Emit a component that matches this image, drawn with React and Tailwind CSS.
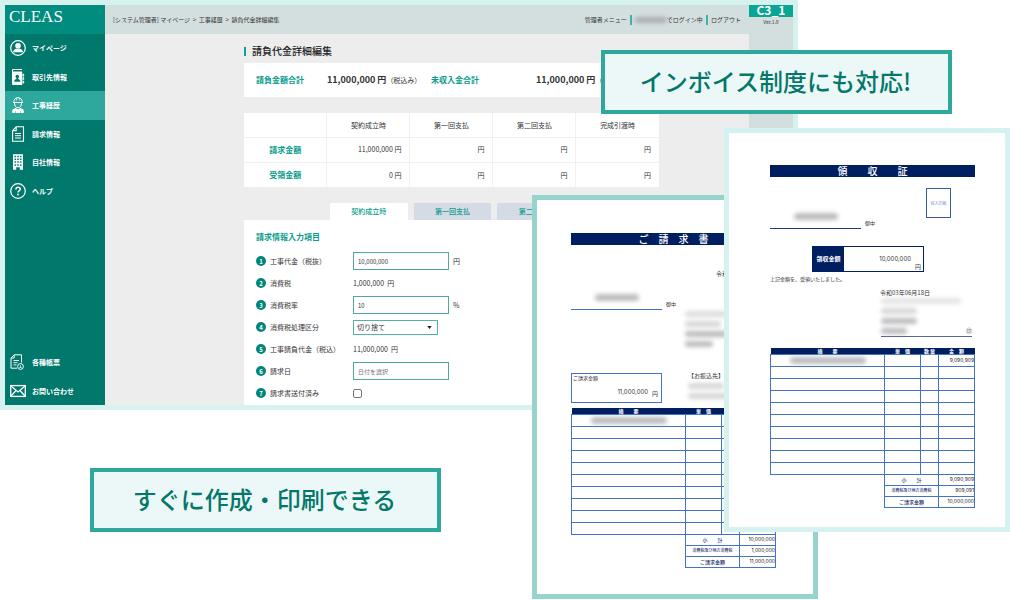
import React, { useState } from 'react';
import clsx from 'clsx';

const MENU = [
  { label: 'マイページ', Icon: UserIcon },
  { label: '取引先情報', Icon: ContactIcon },
  { label: '工事経歴', Icon: WorkerIcon, active: true },
  { label: '請求情報', Icon: BillIcon },
  { label: '自社情報', Icon: BuildingIcon },
  { label: 'ヘルプ', Icon: HelpIcon },
];

const SUB_MENU = [
  { label: '各種帳票', Icon: ReportIcon },
  { label: 'お問い合わせ', Icon: MailIcon },
];

const STAGES = ['契約成立時', '第一回支払', '第二回支払', '完成引渡時'];

const AMOUNTS = [
  { label: '請求金額', values: ['11,000,000 円', '円', '円', '円'] },
  { label: '受領金額', values: ['0 円', '円', '円', '円'] },
];

const BLANK_ROWS = [1, 2, 3, 4, 5, 6, 7, 8, 9];

export default function App() {
  return (
    <div className="relative min-h-screen overflow-hidden bg-white font-['Noto_Sans_CJK_JP',sans-serif] text-[#333]">
      <AppWindow />
      <Invoice />
      <Receipt />
      <Callout className="right-[58px] top-[50px]">インボイス制度にも対応!</Callout>
      <Callout className="left-[90px] top-[468px]">すぐに作成・印刷できる</Callout>
    </div>
  );
}

function Callout({ className, children }) {
  return (
    <p
      className={clsx(
        'absolute flex h-16 w-[351px] items-center justify-center border-4 border-[#2ea79c] bg-[#ecf8f7] pr-[2px] pb-[2px] text-2xl font-medium text-[#04776b]',
        className
      )}
    >
      {children}
    </p>
  );
}

/* ---------- App window ---------- */

function AppWindow() {
  return (
    <div className="flex w-[79%] border-5 border-[#d6f2ef] bg-[#ededed]">
      <Sidebar />
      <div className="min-w-0 flex-1">
        <Header />
        <main className="pr-[90px] pl-[139px] pt-[10px]">
          <h1 className="flex items-center gap-[6px] text-[10px] leading-[14px] font-medium text-[#222]">
            <span className="h-[9px] w-[2px] bg-[#0aa594]" />
            請負代金詳細編集
          </h1>
          <Summary />
          <AmountTable />
          <BillingForm />
        </main>
      </div>
      <div className="w-11 bg-[#d3dede] text-center">
        <div className="h-3 bg-[#0aa594] text-[12px] leading-[9px] font-bold text-white">C3_1</div>
        <div className="text-[5px] leading-[10px]">Ver.1.0</div>
      </div>
    </div>
  );
}

function Sidebar() {
  return (
    <nav className="flex w-[100px] flex-col bg-[#00786c] text-[7px] font-bold text-white">
      <div className="h-[29px] bg-[#008c7f] pl-1 font-['Liberation_Serif',serif] text-[17px] leading-6 font-normal">
        CLEAS
      </div>
      <ul className="grid h-[171px] grid-rows-6">
        {MENU.map((item) => (
          <MenuItem key={item.label} {...item} />
        ))}
      </ul>
      <ul className="mt-auto grid h-[57px] grid-rows-2">
        {SUB_MENU.map((item) => (
          <MenuItem key={item.label} {...item} />
        ))}
      </ul>
    </nav>
  );
}

function MenuItem({ label, Icon, active }) {
  return (
    <li className={clsx('flex', active && 'bg-[#2ea79c]')}>
      <a href="#" className="flex flex-1 items-center gap-[6px] pl-[5px]">
        <Icon />
        {label}
      </a>
    </li>
  );
}

function Header() {
  return (
    <header className="flex h-[29px] items-center justify-between bg-[#d3dede] px-2 text-[6px]">
      <div>[システム管理者] マイページ&nbsp; &gt; &nbsp;工事経歴&nbsp; &gt; &nbsp;請負代金詳細編集</div>
      <div className="flex items-center gap-[3px]">
        <a href="#">管理者メニュー</a>
        <span className="h-[10px] w-[2px] bg-[#3fb3a7]" />
        <span className="flex items-center">
          <Smudge className="h-[6px] w-8" />
          でログイン中
        </span>
        <span className="h-[10px] w-[2px] bg-[#3fb3a7]" />
        <a href="#">ログアウト</a>
      </div>
    </header>
  );
}

function Summary() {
  return (
    <dl className="mt-[5px] flex h-[34px] items-center overflow-hidden bg-white pl-3 whitespace-nowrap">
      <dt className="w-[71px] text-[8px] font-bold text-[#0a9d8e]">請負金額合計</dt>
      <dd className="w-[104px] text-[9px] font-bold">
        11,000,000 円<span className="text-[7px] font-normal">（税込み）</span>
      </dd>
      <dt className="w-[105px] text-[8px] font-bold text-[#0a9d8e]">未収入金合計</dt>
      <dd className="text-[9px] font-bold">
        11,000,000 円<span className="text-[7px] font-normal">（税込み）</span>
      </dd>
    </dl>
  );
}

function AmountTable() {
  return (
    <table className="mt-4 w-full table-fixed border-collapse bg-white text-[7px]">
      <thead>
        <tr className="h-6">
          <td />
          {STAGES.map((stage) => (
            <th key={stage} scope="col" className="border-l border-[#f0f0f0] font-normal">
              {stage}
            </th>
          ))}
        </tr>
      </thead>
      <tbody>
        {AMOUNTS.map((row) => (
          <tr key={row.label} className="h-[25px] border-t border-[#f0f0f0]">
            <th scope="row" className="text-[8px] font-bold text-[#0a9d8e]">
              {row.label}
            </th>
            {row.values.map((value, i) => (
              <td key={i} className="border-l border-[#f0f0f0] pr-2 text-right">
                {value}
              </td>
            ))}
          </tr>
        ))}
      </tbody>
    </table>
  );
}

function BillingForm() {
  const [tab, setTab] = useState(0);

  return (
    <section className="mt-4 text-[7px]">
      <div className="grid grid-cols-4 gap-[6px] pl-[86px]">
        {STAGES.map((stage, i) => (
          <button
            key={stage}
            type="button"
            onClick={() => setTab(i)}
            className={clsx('h-[17px] font-medium text-[#0a9d8e]', i === tab ? 'bg-white' : 'bg-[#d5dbe4]')}
          >
            {stage}
          </button>
        ))}
      </div>
      <form className="bg-white pt-[11px] pb-px pl-3">
        <h2 className="mb-[7px] text-[8px] leading-3 font-bold text-[#0a9d8e]">請求情報入力項目</h2>
        <Field no={1} label="工事代金（税抜）" id="price">
          <input id="price" className="h-[18px] w-24 border border-[#4fa79f] px-1 text-[6px]" defaultValue="10,000,000" />
          円
        </Field>
        <Field no={2} label="消費税">1,000,000 &nbsp;円</Field>
        <Field no={3} label="消費税率" id="rate">
          <input id="rate" className="h-[18px] w-24 border border-[#4fa79f] px-1 text-[6px]" defaultValue="10" />%
        </Field>
        <Field no={4} label="消費税処理区分" id="rounding">
          <span className="relative">
            <select id="rounding" className="block h-[15px] w-[85px] appearance-none border border-[#4fb3a9] px-[3px]">
              <option>切り捨て</option>
              <option>切り上げ</option>
              <option>四捨五入</option>
            </select>
            <svg viewBox="0 0 6 4" className="pointer-events-none absolute top-[6px] right-[6px] h-[3px] w-[5px]">
              <path d="M0 0h6L3 4z" fill="#222" />
            </svg>
          </span>
        </Field>
        <Field no={5} label="工事請負代金（税込）">11,000,000 &nbsp;円</Field>
        <Field no={6} label="請求日" id="date">
          <input
            id="date"
            className="h-[18px] w-24 border border-[#4fa79f] px-1 text-[6px] placeholder:text-[#777]"
            placeholder="日付を選択"
          />
        </Field>
        <Field no={7} label="請求書送付済み" id="sent">
          <input id="sent" type="checkbox" className="size-[9px] appearance-none rounded-xs border border-[#777] checked:bg-[#0a9d8e]" />
        </Field>
      </form>
    </section>
  );
}

function Field({ no, label, id, children }) {
  return (
    <div className="flex h-[22px] items-center">
      <span className="mr-1 flex size-[10px] items-center justify-center rounded-full bg-[#00857a] text-[6px] font-bold text-white">
        {no}
      </span>
      {id ? (
        <label htmlFor={id} className="w-[83px]">
          {label}
        </label>
      ) : (
        <span className="w-[83px]">{label}</span>
      )}
      <div className="flex items-center gap-1">{children}</div>
    </div>
  );
}

/* ---------- Documents ---------- */

// stands in for names and addresses that are hidden
function Smudge({ className }) {
  return <span className={clsx('block rounded-sm bg-[#8f8f94]/60 blur-[2px]', className)} />;
}

function Invoice() {
  return (
    <article className="absolute top-[195px] right-48 h-[404px] w-[286px] border-5 border-[#96d3cd] bg-white pt-[33px] pr-[37px] pl-[34px] text-[6px] leading-[6px]">
      <h2 className="h-3 bg-[#001f60] text-center text-[10px] leading-3 font-medium text-white">ご　請　求　書</h2>
      <p className="mt-[26px] ml-[145px] whitespace-nowrap">令和03年06月18日</p>
      <Recipient className="mt-[9px] border-[#4472c4]" />
      <div className="mt-px ml-[114px] grid gap-1">
        <Smudge className="h-[6px] w-[70px] opacity-50" />
        <Smudge className="h-[6px] w-9 opacity-60" />
        <Smudge className="h-[6px] w-12" />
        <Smudge className="h-[6px] w-7" />
      </div>
      <div className="mt-[26px] flex gap-[26px]">
        <div className="h-[30px] w-[91px] border border-[#4472c4] p-px">
          <div className="text-[5px]">ご請求金額</div>
          <div className="mt-2 flex justify-end gap-1 pr-[2px] font-['Inter','Noto_Sans_CJK_JP',sans-serif]">
            11,000,000
            <span className="pt-[2px]">円</span>
          </div>
        </div>
        <div className="grid content-start gap-1">
          <div>【お振込先】</div>
          <Smudge className="h-[6px] w-9 opacity-60" />
          <Smudge className="h-[6px] w-12 opacity-60" />
        </div>
      </div>
      <ItemTable
        className="mt-[5px]"
        amount="10,000,000"
        totals={[
          ['小　　計', '10,000,000'],
          ['消費税及び地方消費税', '1,000,000'],
          ['ご請求金額', '11,000,000'],
        ]}
      />
    </article>
  );
}

function Receipt() {
  return (
    <article className="absolute top-32 right-0 h-[404px] w-[286px] border-5 border-[#d6f2f0] bg-white pt-8 pr-[30px] pl-[41px] text-[6px] leading-[6px]">
      <h2 className="h-3 bg-[#001f60] text-center text-[10px] leading-3 font-medium text-white">領　　収　　証</h2>
      <div className="mt-[11px] flex h-[41px] justify-between pr-6">
        <Recipient className="self-end border-[#1d3c80]" />
        <div className="flex h-[30px] w-[25px] items-center justify-center border border-[#3c5a9a] text-[4px] text-[#6a8fd0]">
          収入印紙
        </div>
      </div>
      <div className="mt-[17px] ml-[42px] flex h-[26px] w-28 border border-[#001f60]">
        <div className="flex w-[31px] items-center justify-center bg-[#001f60] font-bold text-white">領収金額</div>
        <div className="flex-1 pt-[9px] pr-1 text-right font-['Inter',sans-serif]">10,000,000</div>
        <div className="self-end pr-[2px] pb-px">円</div>
      </div>
      <p className="mt-1 text-[5px] leading-[6px]">上記金額を、受領いたしました。</p>
      <p className="mt-2 ml-[110px]">令和03年06月18日</p>
      <div className="mt-[2px] ml-[111px] grid w-[91px] gap-1 border-b border-[#5a6a8c] pb-[2px]">
        <Smudge className="h-[6px] w-20 opacity-40" />
        <Smudge className="h-[6px] w-9 opacity-60" />
        <Smudge className="h-[6px] w-9" />
        <div className="flex justify-between">
          <Smudge className="h-[6px] w-[26px]" />
          <span className="text-[#667]">㊞</span>
        </div>
      </div>
      <ItemTable
        className="mt-[11px]"
        amount="9,090,909"
        totals={[
          ['小　　計', '9,090,909'],
          ['消費税及び地方消費税', '909,091'],
          ['ご請求金額', '10,000,000'],
        ]}
      />
    </article>
  );
}

function Recipient({ className }) {
  return (
    <div className={clsx('flex items-end gap-1', className)}>
      <div className="flex h-6 w-[91px] items-center justify-center border-b border-inherit">
        <Smudge className="h-[7px] w-11" />
      </div>
      <span className="mb-1 text-[5px] leading-[5px]">御中</span>
    </div>
  );
}

function ItemTable({ className, amount, totals }) {
  return (
    <table className={clsx('w-full table-fixed border-collapse text-[5px] leading-[5px] text-[#222]', className)}>
      <colgroup>
        <col />
        <col className="w-9" />
        <col className="w-[18px]" />
        <col className="w-9" />
      </colgroup>
      <thead className="bg-[#001f60] text-white">
        <tr className="h-[6px]">
          <th className="p-0">摘　　要</th>
          <th className="p-0">単　価</th>
          <th className="p-0">数 量</th>
          <th className="p-0">金　額</th>
        </tr>
      </thead>
      <tbody>
        <tr className="h-3">
          <td className="border border-[#4472c4] p-0">
            <Smudge className="mx-auto h-[7px] w-[76px]" />
          </td>
          <td className="border border-[#4472c4] p-0" />
          <td className="border border-[#4472c4] p-0" />
          <td className="border border-[#4472c4] p-0 text-right font-['Inter',sans-serif]">{amount}</td>
        </tr>
        {BLANK_ROWS.map((n) => (
          <tr key={n} className="h-3">
            <td className="border border-[#4472c4] p-0" />
            <td className="border border-[#4472c4] p-0" />
            <td className="border border-[#4472c4] p-0" />
            <td className="border border-[#4472c4] p-0" />
          </tr>
        ))}
      </tbody>
      <tfoot>
        {totals.map(([label, value], i) => (
          <tr key={label} className="h-[11px]">
            <td className="p-0" />
            <th
              colSpan={2}
              scope="row"
              className={clsx(
                'border border-[#4472c4] p-0 font-medium whitespace-nowrap text-[#1d2f6a]',
                i === 1 && 'text-[4px]'
              )}
            >
              {label}
            </th>
            <td className="border border-[#4472c4] p-0 text-right font-['Inter',sans-serif]">{value}</td>
          </tr>
        ))}
      </tfoot>
    </table>
  );
}

/* ---------- Icons ---------- */

function Svg({ children }) {
  return (
    <svg viewBox="0 0 16 16" className="size-4 shrink-0" fill="none" stroke="currentColor">
      {children}
    </svg>
  );
}

function UserIcon() {
  return (
    <Svg>
      <circle cx="8" cy="8" r="7.3" strokeWidth="1.2" />
      <circle cx="8" cy="5.8" r="2.8" fill="currentColor" stroke="none" />
      <path d="M3 12.3c.3-2.2 1.8-3.200 3.200-3.500h3.600c1.400.3 2.900 1.300 3.200 3.500z" fill="currentColor" stroke="none" />
    </Svg>
  );
}

function ContactIcon() {
  return (
    <Svg>
      <path d="M2.600.5h9.400M2.500.5v3" strokeWidth="1" />
      <path d="M2 2.600h10.200V16H3.200C2.400 16 2 15.500 2 15z" fill="currentColor" stroke="none" />
      <path d="M12.800 5h1v2.200h-1zM12.800 8.500h1v2.200h-1zM12.800 12h1v2.200h-1z" fill="currentColor" strokeWidth=".5" />
      <circle cx="7.300" cy="7.500" r="1.800" fill="#00786c" stroke="none" />
      <path d="M4.200 12.800c0-2 1.200-2.600 2.200-2.800V8.500h1.800V10c1 .2 2.200.8 2.200 2.800z" fill="#00786c" stroke="none" />
    </Svg>
  );
}

function WorkerIcon() {
  return (
    <Svg>
      <path d="M3.800 5.300C3.800 2.500 5.600.6 8 .6s4.200 1.900 4.200 4.700M3 5.500h10" strokeWidth="1" />
      <path d="M6.600 1v2.500M9.400 1v2.500" strokeWidth=".7" />
      <path d="M4.500 6c0 3 1.500 4.800 3.500 4.800s3.500-1.800 3.500-4.800" strokeWidth="1" />
      <path d="M2.200 16v-2.200c0-1.500 1.600-2.300 3.600-2.700L8 12.400l2.200-1.300c2 .4 3.600 1.200 3.600 2.700V16z" fill="currentColor" stroke="none" />
      <path d="M5.500 14V16M10.500 14V16" stroke="#2ea79c" strokeWidth=".5" />
    </Svg>
  );
}

function BillIcon() {
  return (
    <Svg>
      <path d="M6.200.8H13.500v14.400H2.600V4.600zM6.200.8v3.800H2.600" strokeWidth="1.100" />
      <path d="M5 7.500h6M5 9.700h6M5 12h6" strokeWidth="1" />
    </Svg>
  );
}

function BuildingIcon() {
  return (
    <Svg>
      <path d="M3 .2h10V15.800H9.800v-2.600H6.200v2.600H3z" fill="currentColor" stroke="none" />
      <path d="M4.500 2.500h7M4.500 5.300h7M4.500 8.100h7M4.500 10.900h7" stroke="#00786c" strokeWidth="1.500" strokeDasharray="1.600 1.100" />
    </Svg>
  );
}

function HelpIcon() {
  return (
    <Svg>
      <circle cx="8" cy="8" r="7.300" strokeWidth="1.200" />
      <path d="M5.900 6.400c0-1.400.9-2.200 2.100-2.200s2.200.8 2.200 2c0 1.700-2.200 1.700-2.200 3.300" strokeWidth="1.400" />
      <circle cx="8" cy="11.500" r=".9" fill="currentColor" stroke="none" />
    </Svg>
  );
}

function ReportIcon() {
  return (
    <Svg>
      <path d="M7 14.200H1V4L4.200.8h7.300V8.500M4.200.8V4H1" strokeWidth="1" />
      <path d="M3.500 6.500H9M3.500 8.700H7.500M3.500 10.900h3" strokeWidth=".9" />
      <circle cx="10.500" cy="12.500" r="2.900" strokeWidth="1" />
      <path d="M10.500 11v3M9.500 13l1 1 1-1" strokeWidth=".7" />
    </Svg>
  );
}

function MailIcon() {
  return (
    <Svg>
      <rect x=".7" y="2.600" width="14.600" height="10.800" strokeWidth="1.300" />
      <path d="M1 3l7 6 7-6M1 13l5-5.500M15 13l-5-5.500" strokeWidth="1.200" />
    </Svg>
  );
}
